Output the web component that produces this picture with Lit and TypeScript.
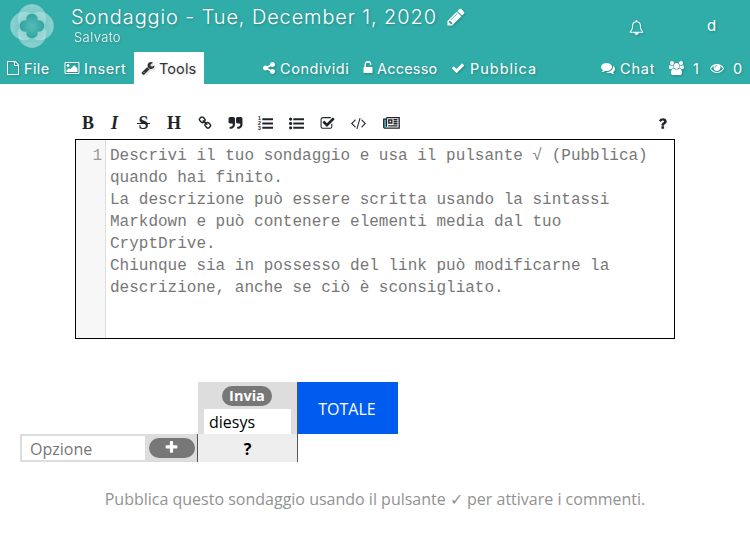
import { LitElement, html, css, svg } from "lit";
import { customElement } from "lit/decorators.js";

const paths: Record<string, string> = {
  pencil: "M491 1536l91-91-235-235-91 91v107h128v128h107zm523-928q0-22-22-22-10 0-17 7l-542 542q-7 7-7 17 0 22 22 22 10 0 17-7l542-542q7-7 7-17zm-54-192l416 416-832 832h-416v-416zm683 96q0 53-37 90l-166 166-416-416 166-165q36-38 90-38 53 0 91 38l235 234q37 39 37 91z",
  bell: "M912 1696q0-16-16-16-59 0-101.5-42.5t-42.5-101.5q0-16-16-16t-16 16q0 73 51.5 124.5t124.5 51.5q16 0 16-16zm-666-288h1300q-266-300-266-832 0-51-24-105t-69-103-121.5-80.5-169.5-31.5-169.5 31.5-121.5 80.5-69 103-24 105q0 532-266 832zm1482 0q0 52-38 90t-90 38h-448q0 106-75 181t-181 75-181-75-75-181h-448q-52 0-90-38t-38-90q50-42 91-88t85-119.5 74.5-158.5 50-206 19.5-260q0-152 117-282.5t307-158.5q-8-19-8-39 0-40 28-68t68-28 68 28 28 68q0 20-8 39 190 28 307 158.5t117 282.5q0 139 19.5 260t50 206 74.5 158.5 85 119.5 91 88z",
  file: "M1596 380q28 28 48 76t20 88v1152q0 40-28 68t-68 28h-1344q-40 0-68-28t-28-68v-1600q0-40 28-68t68-28h896q40 0 88 20t76 48zm-444-244v376h376q-10-29-22-41l-313-313q-12-12-41-22zm384 1528v-1024h-416q-40 0-68-28t-28-68v-416h-768v1536h1280z",
  picture: "M576 576q0 80-56 136t-136 56-136-56-56-136 56-136 136-56 136 56 56 136zm1024 384v448h-1408v-192l320-320 160 160 512-512zm96-704h-1600q-13 0-22.5 9.5t-9.5 22.5v1216q0 13 9.5 22.5t22.5 9.5h1600q13 0 22.5-9.5t9.5-22.5v-1216q0-13-9.5-22.5t-22.5-9.5zm160 32v1216q0 66-47 113t-113 47h-1600q-66 0-113-47t-47-113v-1216q0-66 47-113t113-47h1600q66 0 113 47t47 113z",
  wrench: "M448 1472q0-26-19-45t-45-19-45 19-19 45 19 45 45 19 45-19 19-45zm644-420l-682 682q-37 37-90 37-52 0-91-37l-106-108q-38-36-38-90 0-53 38-91l681-681q39 98 114.5 173.5t173.5 114.5zm634-435q0 39-23 106-47 134-164.5 217.5t-258.5 83.5q-185 0-316.5-131.5t-131.5-316.5 131.5-316.5 316.5-131.5q58 0 121.5 16.5t107.5 46.5q16 11 16 28t-16 28l-293 169v224l193 107q5-3 79-48.5t135.5-81 70.5-35.5q15 0 23.5 10t8.5 25z",
  share: "M1344 1024q133 0 226.5 93.5t93.5 226.5-93.5 226.5-226.5 93.5-226.5-93.5-93.5-226.5q0-12 2-34l-360-180q-92 86-218 86-133 0-226.5-93.5t-93.5-226.5 93.5-226.5 226.5-93.5q126 0 218 86l360-180q-2-22-2-34 0-133 93.5-226.5t226.5-93.5 226.5 93.5 93.5 226.5-93.5 226.5-226.5 93.5q-126 0-218-86l-360 180q2 22 2 34t-2 34l360 180q92-86 218-86z",
  unlock: "M1376 768q40 0 68 28t28 68v576q0 40-28 68t-68 28h-960q-40 0-68-28t-28-68v-576q0-40 28-68t68-28h32v-320q0-185 131.5-316.5t316.5-131.5 316.5 131.5 131.5 316.5q0 26-19 45t-45 19h-64q-26 0-45-19t-19-45q0-106-75-181t-181-75-181 75-75 181v320h736z",
  check: "M1671 566q0 40-28 68l-724 724-136 136q-28 28-68 28t-68-28l-136-136-362-362q-28-28-28-68t28-68l136-136q28-28 68-28t68 28l294 295 656-657q28-28 68-28t68 28l136 136q28 28 28 68z",
  comments: "M1408 768q0 139-94 257t-256.5 186.5-353.5 68.5q-86 0-176-16-124 88-278 128-36 9-86 16h-3q-11 0-20.5-8t-11.5-21q-1-3-1-6.5t.5-6.5 2-6l2.5-5 3.5-5.5 4-5 4.5-5 4-4.5q5-6 23-25t26-29.5 22.5-29 25-38.5 20.5-44q-124-72-195-177t-71-224q0-139 94-257t256.5-186.5 353.5-68.5 353.5 68.5 256.5 186.5 94 257zm384 256q0 120-71 224.5t-195 176.5q10 24 20.5 44t25 38.5 22.5 29 26 29.5 23 25q1 1 4 4.5t4.5 5 4 5 3.5 5.5l2.5 5 2 6 .5 6.5-1 6.5q-3 14-13 22t-22 7q-50-7-86-16-154-40-278-128-90 16-176 16-271 0-472-132 58 4 88 4 161 0 309-45t264-129q125-92 192-212t67-254q0-77-23-152 129 71 204 178t75 230z",
  eye: "M1664 960q-152-236-381-353 61 104 61 225 0 185-131.5 316.5t-316.5 131.5-316.5-131.5-131.5-316.5q0-121 61-225-229 117-381 353 133 205 333.5 326.5t434.5 121.5 434.5-121.5 333.5-326.5zm-720-384q0-20-14-34t-34-14q-125 0-214.5 89.5t-89.5 214.5q0 20 14 34t34 14 34-14 14-34q0-86 61-147t147-61q20 0 34-14t14-34zm848 384q0 34-20 69-140 230-376.5 368.5t-499.5 138.5-499.5-139-376.5-368q-20-35-20-69t20-69q140-229 376.5-368t499.5-139 499.5 139 376.5 368q20 35 20 69z",
  link: "M1520 1216q0-40-28-68l-208-208q-28-28-68-28-42 0-72 32 3 3 19 18.5t21.5 21.5 15 19 13 25.5 3.5 27.5q0 40-28 68t-68 28q-15 0-27.5-3.5t-25.5-13-19-15-21.5-21.5-18.5-19q-33 31-33 73 0 40 28 68l206 207q27 27 68 27 40 0 68-26l147-146q28-28 28-67zm-703-705q0-40-28-68l-206-207q-28-28-68-28-39 0-68 27l-147 146q-28 28-28 67 0 40 28 68l208 208q27 27 68 27 42 0 72-31-3-3-19-18.5t-21.5-21.5-15-19-13-25.5-3.5-27.5q0-40 28-68t68-28q15 0 27.5 3.5t25.5 13 19 15 21.5 21.5 18.5 19q33-31 33-73zm895 705q0 120-85 203l-147 146q-83 83-203 83-121 0-204-85l-206-207q-83-83-83-203 0-123 88-209l-88-88q-86 88-208 88-120 0-204-84l-208-208q-84-84-84-204t85-203l147-146q83-83 203-83 121 0 204 85l206 207q83 83 83 203 0 123-88 209l88 88q86-88 208-88 120 0 204 84l208 208q84 84 84 204z",
  quote: "M832 320v704q0 104-40.5 198.5t-109.5 163.5-163.5 109.5-198.5 40.5h-64q-26 0-45-19t-19-45v-128q0-26 19-45t45-19h64q106 0 181-75t75-181v-32q0-40-28-68t-68-28h-224q-80 0-136-56t-56-136v-384q0-80 56-136t136-56h384q80 0 136 56t56 136zm896 0v704q0 104-40.5 198.5t-109.5 163.5-163.5 109.5-198.5 40.5h-64q-26 0-45-19t-19-45v-128q0-26 19-45t45-19h64q106 0 181-75t75-181v-32q0-40-28-68t-68-28h-224q-80 0-136-56t-56-136v-384q0-80 56-136t136-56h384q80 0 136 56t56 136z",
  todo: "M1472 930v318q0 119-84.5 203.5t-203.5 84.5h-832q-119 0-203.5-84.5t-84.5-203.5v-832q0-119 84.5-203.5t203.5-84.5h832q63 0 117 25 15 7 18 23 3 17-9 29l-49 49q-10 10-23 10-3 0-9-2-23-6-45-6h-832q-66 0-113 47t-47 113v832q0 66 47 113t113 47h832q66 0 113-47t47-113v-254q0-13 9-22l64-64q10-10 23-10 6 0 12 3 20 8 20 29zm231-489l-814 814q-24 24-57 24t-57-24l-430-430q-24-24-24-57t24-57l110-110q24-24 57-24t57 24l263 263 647-647q24-24 57-24t57 24l110 110q24 24 24 57t-24 57z",
  code: "M681 1399l-50 50q-10 10-23 10t-23-10l-466-466q-10-10-10-23t10-23l466-466q10-10 23-10t23 10l50 50q10 10 10 23t-10 23l-393 393 393 393q10 10 10 23t-10 23zm591-1067l-373 1291q-4 13-15.5 19.5t-23.5 2.5l-62-17q-13-4-19.5-15.5t-2.500-24.500l373-1291q4-13 15.500-19.500t23.500-2.500l62 17q13 4 19.500 15.500t2.500 24.500zm657 651l-466 466q-10 10-23 10t-23-10l-50-50q-10-10-10-23t10-23l393-393-393-393q-10-10-10-23t10-23l50-50q10-10 23-10t23 10l466 466q10 10 10 23t-10 23z",
  question: "M1088 1256v240q0 16-12 28t-28 12h-240q-16 0-28-12t-12-28v-240q0-16 12-28t28-12h240q16 0 28 12t12 28zm316-600q0 54-15.5 101t-35 76.5-55 59.5-57.5 43.5-61 35.5q-41 23-68.5 65t-27.5 67q0 17-12 32.5t-28 15.5h-240q-15 0-25.5-18.5t-10.5-37.5v-45q0-83 65-156.5t143-108.5q59-27 84-56t25-76q0-42-46.5-74t-107.5-32q-65 0-108 29-35 25-107 115-13 16-31 16-12 0-25-8l-164-125q-13-10-15.5-25t5.5-28q160-266 464-266 80 0 161 31t146 83 106 127.5 41 158.5z",
  plus: "M1600 736v192q0 40-28 68t-68 28h-416v416q0 40-28 68t-68 28h-192q-40 0-68-28t-28-68v-416h-416q-40 0-68-28t-28-68v-192q0-40 28-68t68-28h416v-416q0-40 28-68t68-28h192q40 0 68 28t28 68v416h416q40 0 68 28t28 68z",
  ul: "M384 1408q0 80-56 136t-136 56-136-56-56-136 56-136 136-56 136 56 56 136zm0-512q0 80-56 136t-136 56-136-56-56-136 56-136 136-56 136 56 56 136zm1408 416v192q0 13-9.5 22.5t-22.5 9.5h-1216q-13 0-22.5-9.5t-9.5-22.5v-192q0-13 9.5-22.5t22.5-9.5h1216q13 0 22.5 9.5t9.5 22.5zm-1408-928q0 80-56 136t-136 56-136-56-56-136 56-136 136-56 136 56 56 136zm1408 416v192q0 13-9.5 22.5t-22.5 9.5h-1216q-13 0-22.5-9.5t-9.5-22.5v-192q0-13 9.5-22.5t22.5-9.5h1216q13 0 22.5 9.5t9.5 22.5zm0-512v192q0 13-9.5 22.5t-22.5 9.5h-1216q-13 0-22.5-9.5t-9.5-22.5v-192q0-13 9.5-22.5t22.5-9.5h1216q13 0 22.5 9.5t9.5 22.5z",
  bars: "M1792 1312v192q0 13-9.5 22.5t-22.5 9.5h-1216q-13 0-22.5-9.5t-9.5-22.5v-192q0-13 9.5-22.5t22.5-9.5h1216q13 0 22.5 9.5t9.5 22.5zm0-512v192q0 13-9.5 22.5t-22.5 9.5h-1216q-13 0-22.5-9.5t-9.5-22.5v-192q0-13 9.5-22.5t22.5-9.5h1216q13 0 22.5 9.5t9.5 22.5zm0-512v192q0 13-9.5 22.5t-22.5 9.5h-1216q-13 0-22.5-9.5t-9.5-22.5v-192q0-13 9.5-22.5t22.5-9.5h1216q13 0 22.5 9.5t9.5 22.5z",
  users: "M529 896q-162 5-265 128h-134q-82 0-138-40.5t-56-118.5q0-353 124-353 6 0 43.500 21t97.500 42.500 119 21.500q67 0 133-23-5 37-5 66 0 139 81 256zm1071 637q0 120-73 189.500t-194 69.500h-874q-121 0-194-69.500t-73-189.500q0-53 3.500-103.500t14-109 26.500-108.500 43-97.500 62-81 85.500-53.500 111.500-20q10 0 43 21.500t73 48 107 48 135 21.500 135-21.500 107-48 73-48 43-21.500q61 0 111.500 20t85.500 53.500 62 81 43 97.500 26.500 108.500 14 109 3.500 103.500zm-1024-1277q0 106-75 181t-181 75-181-75-75-181 75-181 181-75 181 75 75 181zm704 384q0 159-112.500 271.500t-271.500 112.500-271.500-112.500-112.500-271.500 112.500-271.500 271.500-112.500 271.500 112.500 112.500 271.500zm576 225q0 78-56 118.500t-138 40.500h-134q-103-123-265-128 81-117 81-256 0-29-5-66 66 23 133 23 59 0 119-21.500t97.500-42.500 43.500-21q124 0 124 353zm-128-609q0 106-75 181t-181 75-181-75-75-181 75-181 181-75 181 75 75 181z",
};

const boxes: Record<string, string> = {
  picture: "0 0 1920 1792",
  users: "-64 0 1920 1792",
  code: "96 64 1856 1792",
};

function icon(name: string, size: number) {
  const wide = name === "picture" || name === "users";
  return html`<svg class="ic" width=${wide ? size * 1.0714 : size} height=${size} viewBox=${boxes[name] ?? "0 0 1792 1792"}>
    <path fill="currentColor" d=${paths[name]}></path>
  </svg>`;
}

const lobes = [[23, 15.5], [30.5, 23], [23, 30.5], [15.5, 23]];

@customElement("app-root")
export class AppRoot extends LitElement {
  static styles = css`
    :host { display: block; width: 750px; height: 550px; overflow: hidden; background: #fff; font-family: "Open Sans", "Noto Sans", sans-serif; color: #212529; }
    * { box-sizing: border-box; }
    .ic { display: block; flex: none; overflow: visible; }
    header { height: 84px; background: #31ada9; color: #fff; font-family: Inter, "Open Sans", sans-serif; display: flex; flex-direction: column; text-shadow: 1px 1px 3px rgba(0,0,0,.25); }
    header .ic { filter: drop-shadow(1px 1px 1px rgba(0,0,0,.2)); }
    .top { height: 52px; display: flex; }
    .logo { width: 46px; height: 46px; margin: 3px 0 0 9px; flex: none; }
    .titles { margin-left: 16px; width: 410px; }
    .title { display: flex; align-items: center; height: 32px; padding-top: 2px; }
    .title h1 { margin: 0; font-size: 20px; font-weight: 300; letter-spacing: .87px; white-space: nowrap; width: 375px; }
    .saved { font-size: 13px; font-weight: 300; line-height: 13px; padding-left: 3px; margin-top: -1px; letter-spacing: .4px; opacity: .93; }
    .bell { margin: 20px 0 0 148px; }
    .user { margin: 17px 0 0 63px; font-size: 15px; line-height: 18px; }
    .bar { height: 32px; display: flex; align-items: stretch; font-size: 14.5px; }
    .item { display: flex; align-items: center; gap: 5px; white-space: nowrap; flex: none; }
    .file { padding-left: 6px; width: 65px; gap: 4px; letter-spacing: .4px; }
    .insert { width: 69px; gap: 4px; letter-spacing: .55px; }
    .tools { width: 70px; padding-left: 7px; gap: 4px; background: #fff; color: #333; letter-spacing: .1px; text-shadow: 1px 1px 3px rgba(0,0,0,.15); }
    .share { margin-left: 58px; width: 99px; gap: 4px; letter-spacing: .55px; }
    .access { width: 90px; gap: 2px; letter-spacing: .2px; }
    .publish { width: 150px; letter-spacing: 1px; }
    .chat { width: 68px; letter-spacing: .85px; }
    .people { width: 41px; gap: 9px; }
    .views { gap: 9px; }
    .editor { width: 600px; margin: 20px 0 0 75px; }
    .toolbar { height: 35px; display: grid; grid-template-columns: 29px 26px 30px 31px 30px 30px 31px 31px 31px 32px 16px 1fr 15px; align-items: center; padding: 3px 5px 0 7px; }
    .tool { display: flex; align-items: center; height: 24px; }
    .serif { font: bold 18px/20px "Liberation Serif", serif; }
    .code { height: 200px; border: 1px solid #000; display: flex; font: 16px/22px "Liberation Mono", monospace; }
    .gutter { width: 30px; background: #f7f7f7; border-right: 1px solid #ddd; color: #999; text-align: right; padding: 5px 3px 0 0; }
    .text { padding: 5px 0 0 4px; color: #777; white-space: pre; }
    .poll { display: grid; grid-template-columns: 177px 101px 100px; grid-template-rows: 52px 28px; margin: 43px 0 0 20px; }
    .head { background: #ddd; display: flex; flex-direction: column; align-items: flex-start; justify-content: space-between; padding: 4px 0 0 6px; border-right: 1px solid #555; margin-left: 1px; }
    .pill { background: #777; color: #fff; border-radius: 10px; height: 20px; width: 50px; display: flex; align-items: center; justify-content: center; font-size: 14.5px; font-weight: 700; }
    .send { margin-left: 18px; line-height: 18px; padding-bottom: 1px; }
    .name { background: #fff; width: 87px; height: 25px; font-size: 16px; line-height: 26px; padding-left: 5px; color: #000; }
    .total { background: #005bef; color: #fff; display: flex; align-items: center; justify-content: center; font-size: 16px; padding: 2px 2px 0 0; }
    .opt { background: #ddd; padding: 2px; display: flex; align-items: center; gap: 4px; }
    .field { background: #fff; width: 123px; height: 24px; line-height: 26px; font-size: 16px; color: #777; padding-left: 8px; }
    .add { width: 46px; padding-right: 2px; padding-bottom: 1px; }
    .cell { background: #eee; border-left: 1px solid #555; border-right: 1px solid #555; color: #000; font-weight: 700; font-size: 16px; text-align: center; line-height: 30px; }
    .note { margin: 26px 0 0; text-align: center; color: #929292; font-size: 16px; line-height: 22px; white-space: nowrap; }
  `;

  render() {
    const lines = [
      "Descrivi il tuo sondaggio e usa il pulsante √ (Pubblica)",
      "quando hai finito.",
      "La descrizione può essere scritta usando la sintassi",
      "Markdown e può contenere elementi media dal tuo",
      "CryptDrive.",
      "Chiunque sia in possesso del link può modificarne la",
      "descrizione, anche se ciò è sconsigliato.",
    ];
    return html`
      <header>
        <div class="top">
          <svg class="logo" viewBox="0 0 46 46">
            <defs>
              <linearGradient id="petal" x1="0" y1="0" x2="0" y2="1">
                <stop offset="0" stop-color="#fff" stop-opacity=".4"></stop>
                <stop offset="1" stop-color="#fff" stop-opacity=".03"></stop>
              </linearGradient>
              <radialGradient id="heart" gradientUnits="userSpaceOnUse" cx="23" cy="23" r="12">
                <stop offset="0" stop-color="#5abab6"></stop>
                <stop offset="1" stop-color="#2fa5a1"></stop>
              </radialGradient>
            </defs>
            <g fill="#fff" fill-opacity=".09">${lobes.map(([x, y]) => svg`<circle cx=${x} cy=${y} r="14.200"></circle>`)}</g>
            <g fill="url(#petal)">${lobes.map((_, i) => svg`<circle cx="23" cy="15.500" r="14.200" transform="rotate(${i * 90} 23 23)"></circle>`)}</g>
            <path fill="url(#heart)" d="M17.500 17.500C15.500 8.500 30.500 8.500 28.500 17.500C37.500 15.500 37.500 30.500 28.500 28.500C30.500 37.500 15.500 37.500 17.500 28.500C8.500 30.500 8.500 15.500 17.500 17.500Z"></path>
          </svg>
          <div class="titles">
            <div class="title"><h1>Sondaggio - Tue, December 1, 2020</h1>${icon("pencil", 20)}</div>
            <div class="saved">Salvato</div>
          </div>
          <div class="bell">${icon("bell", 15)}</div>
          <div class="user">d</div>
        </div>
        <nav class="bar">
          <div class="item file">${icon("file", 14)}<span>File</span></div>
          <div class="item insert">${icon("picture", 14)}<span>Insert</span></div>
          <div class="item tools">${icon("wrench", 14)}<span>Tools</span></div>
          <div class="item share">${icon("share", 14)}<span>Condividi</span></div>
          <div class="item access">${icon("unlock", 14)}<span>Accesso</span></div>
          <div class="item publish">${icon("check", 14)}<span>Pubblica</span></div>
          <div class="item chat">${icon("comments", 14)}<span>Chat</span></div>
          <div class="item people">${icon("users", 14)}<span>1</span></div>
          <div class="item views">${icon("eye", 14)}<span>0</span></div>
        </nav>
      </header>
      <section class="editor">
        <div class="toolbar">
          <span class="tool serif">B</span>
          <span class="tool serif"><i>I</i></span>
          <span class="tool serif"><s>&hairsp;S&hairsp;</s></span>
          <span class="tool serif">H</span>
          <span class="tool">${icon("link", 14)}</span>
          <span class="tool">${icon("quote", 15)}</span>
          <span class="tool"><svg class="ic" width="15" height="15" viewBox="0 0 1792 1792"><path fill="currentColor" d=${paths.bars}></path><g font-size="620" font-weight="bold" font-family="Liberation Sans, sans-serif" fill="currentColor"><text x="0" y="520">1</text><text x="0" y="1110">2</text><text x="0" y="1700">3</text></g></svg></span>
          <span class="tool">${icon("ul", 15)}</span>
          <span class="tool">${icon("todo", 15)}</span>
          <span class="tool">${icon("code", 15)}</span>
          <span class="tool"><svg class="ic" width="17" height="12" viewBox="0 0 17 12"><path fill="#55b9dc" d="M1 2.500h2.500v8h-2.500z"></path><path fill="none" stroke="currentColor" stroke-width="1.300" d="M3.500 .700h12.700v10.500h-14q-1.500 0-1.500-1.500v-7.500h2.800M3.500 .700v9"></path><path fill="none" stroke="currentColor" stroke-width="1.400" d="M5.800 3h3v3h-3zM10.500 2.800h4M10.500 4.800h4M10.500 6.800h4M5.200 8.900h9.300"></path></svg></span>
          <span></span>
          ${icon("question", 15)}
        </div>
        <div class="code"><div class="gutter">1</div><div class="text">${lines.join("\n")}</div></div>
      </section>
      <section class="poll">
        <div></div>
        <div class="head"><div class="pill send">Invia</div><div class="name">diesys</div></div>
        <div class="total">TOTALE</div>
        <div class="opt"><div class="field">Opzione</div><div class="pill add">${icon("plus", 15)}</div></div>
        <div class="cell">?</div>
      </section>
      <p class="note">Pubblica questo sondaggio usando il pulsante ✓ per attivare i commenti.</p>
    `;
  }
}
